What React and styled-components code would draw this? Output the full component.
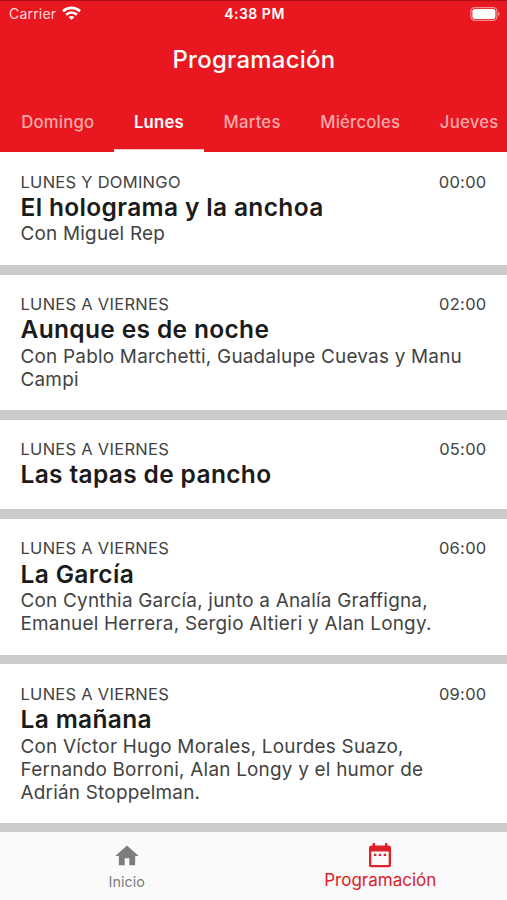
import React from 'react';
import styled, { createGlobalStyle } from 'styled-components';
import { MdHome } from 'react-icons/md';


const GlobalStyle = createGlobalStyle`
    * {
        box-sizing: border-box;
    }
    body {
        margin: 0;
        background: #fff;
        font-family: Inter, "Liberation Sans", sans-serif;
    }
`;

const Screen = styled.div`
    height: 900px;
    display: flex;
    flex-direction: column;
    overflow: hidden;
`;

const Header = styled.header`
    height: 152.3px;
    flex-shrink: 0;
    display: flex;
    flex-direction: column;
    background: #e91820;
    color: #fff;
    box-shadow: inset 0 2px 1px -1px #a81018;
`;

const StatusBar = styled.div`
    height: 27px;
    padding: 0 7px 0 9px;
    display: grid;
    grid-template-columns: 1fr auto 1fr;
    align-items: center;
`;

const Carrier = styled.div`
    display: flex;
    align-items: center;
    gap: 6px;
    font-size: 14px;
    letter-spacing: 0.2px;
    color: #ffdcdc;
`;

const Clock = styled.div`
    font-size: 14px;
    font-weight: 600;
    letter-spacing: 0.5px;
`;

const Battery = styled.div`
    display: flex;
    justify-content: flex-end;
`;

const ScreenTitle = styled.h1`
    margin: 0;
    padding-left: 1px;
    height: 65px;
    line-height: 65px;
    text-align: center;
    font-size: 23.9px;
    font-weight: 500;
    letter-spacing: 0.3px;
`;

const Tabs = styled.nav`
    flex: 1;
    display: flex;
    padding-left: 1.4px;
    overflow: hidden;
`;

const Tab = styled.div`
    flex-shrink: 0;
    padding: 0 19.8px;
    line-height: 60px;
    font-size: 16.7px;
    font-weight: ${({ $active }) => ($active ? 600 : 500)};
    letter-spacing: 0.22px;
    color: ${({ $active }) => ($active ? '#fff' : '#f9a9a9')};
    box-shadow: ${({ $active }) => ($active ? 'inset 0 -2.7px #fff' : 'none')};
`;

const List = styled.main`
    flex: 1;
    min-height: 0;
    overflow: hidden;
    display: flex;
    flex-direction: column;
    gap: 9.7px;
    background: #cbcbcb;
`;

const Card = styled.article`
    flex-shrink: 0;
    padding: 19.4px 20.5px 19.3px;
    background: #fff;
`;

const Meta = styled.div`
    display: flex;
    justify-content: space-between;
    line-height: 20px;
    font-size: 16.5px;
    letter-spacing: 0.27px;
    color: #424242;
`;

const ShowName = styled.h2`
    margin: 0;
    padding-top: 1.2px;
    line-height: 29.6px;
    font-size: 24.5px;
    font-weight: 600;
    letter-spacing: 0.35px;
    color: #1b1b1b;
`;

const Hosts = styled.p`
    margin: 0;
    line-height: 23.1px;
    font-size: 18.9px;
    letter-spacing: 0.23px;
    color: #424242;
`;

const BottomNav = styled.footer`
    height: 68px;
    flex-shrink: 0;
    display: flex;
    background: #fafafa;
`;

const NavItem = styled.div`
    flex: 1;
    display: flex;
    flex-direction: column;
    align-items: center;
    padding-top: 10px;
    font-size: ${({ $active }) => ($active ? '17px' : '14.3px')};
    line-height: ${({ $active }) => ($active ? '23px' : '21px')};
    letter-spacing: ${({ $active }) => ($active ? '0' : '0.1px')};
    color: ${({ $active }) => ($active ? '#df2028' : '#7d7d7d')};
    svg {
        display: block;
        margin-bottom: 1px;
    }
`;


const days = ['Domingo', 'Lunes', 'Martes', 'Miércoles', 'Jueves'];

const shows = [
    { days: 'LUNES Y DOMINGO', time: '00:00', name: 'El holograma y la anchoa', hosts: 'Con Miguel Rep' },
    { days: 'LUNES A VIERNES', time: '02:00', name: 'Aunque es de noche', hosts: 'Con Pablo Marchetti, Guadalupe Cuevas y Manu Campi' },
    { days: 'LUNES A VIERNES', time: '05:00', name: 'Las tapas de pancho' },
    { days: 'LUNES A VIERNES', time: '06:00', name: 'La García', hosts: 'Con Cynthia García, junto a Analía Graffigna, Emanuel Herrera, Sergio Altieri y Alan Longy.' },
    { days: 'LUNES A VIERNES', time: '09:00', name: 'La mañana', hosts: 'Con Víctor Hugo Morales, Lourdes Suazo, Fernando Borroni, Alan Longy y el humor de Adrián Stoppelman.' },
];

const WifiIcon = () => (
    <svg width="19" height="15" viewBox="0 0 19 15" fill="none" stroke="#fff" strokeWidth="2.6">
        <path d="M1 5.2C5.8 .7 13.2 .7 18 5.2" />
        <path d="M4.1 8.7C7.2 5.7 11.8 5.7 14.9 8.7" />
        <path d="M9.5 14L6.6 11C8.2 9.5 10.8 9.5 12.4 11Z" fill="#fff" stroke="none" />
    </svg>
);

const BatteryIcon = () => (
    <svg width="30" height="14" viewBox="0 0 30 14">
        <rect x="0.9" y="0.6" width="26" height="12.8" rx="3.6" fill="none" stroke="#f48e90" strokeWidth="1.2" />
        <rect x="2.4" y="2.1" width="23" height="9.8" rx="2.2" fill="#fff" />
        <path d="M28.2 4.8C30 5.4 30 8.6 28.2 9.2Z" fill="#f48e90" />
    </svg>
);

const CalendarIcon = () => (
    <svg width="24" height="26" viewBox="0 0 24 26" fill="currentColor">
        <path fillRule="evenodd" d="M4.6 1H7V3.4H17V1H19.4V3.4H20.5A2.5 2.5 0 0 1 23 5.9V22.7A2.5 2.5 0 0 1 20.5 25.2H3.5A2.5 2.5 0 0 1 1 22.7V5.9A2.5 2.5 0 0 1 3.5 3.4H4.6ZM3.3 9.4V22.9H20.7V9.4Z" />
        <path d="M5.9 11.7H8.3V14.1H5.9ZM10.8 11.7H13.2V14.1H10.8ZM15.7 11.7H18.1V14.1H15.7Z" />
    </svg>
);


const App = () => {
    return (
        <>
            <GlobalStyle />
            <Screen>
                <Header>
                    <StatusBar>
                        <Carrier>Carrier <WifiIcon /></Carrier>
                        <Clock>4:38 PM</Clock>
                        <Battery><BatteryIcon /></Battery>
                    </StatusBar>
                    <ScreenTitle>Programación</ScreenTitle>
                    <Tabs>
                        {days.map((day) => (
                            <Tab key={day} $active={day === 'Lunes'}>{day}</Tab>
                        ))}
                    </Tabs>
                </Header>
                <List>
                    {shows.map((show) => (
                        <Card key={show.time}>
                            <Meta>
                                <span>{show.days}</span>
                                <span>{show.time}</span>
                            </Meta>
                            <ShowName>{show.name}</ShowName>
                            {show.hosts && <Hosts>{show.hosts}</Hosts>}
                        </Card>
                    ))}
                </List>
                <BottomNav>
                    <NavItem>
                        <MdHome size={28} />
                        Inicio
                    </NavItem>
                    <NavItem $active>
                        <CalendarIcon />
                        Programación
                    </NavItem>
                </BottomNav>
            </Screen>
        </>
    )
};

export default App;
